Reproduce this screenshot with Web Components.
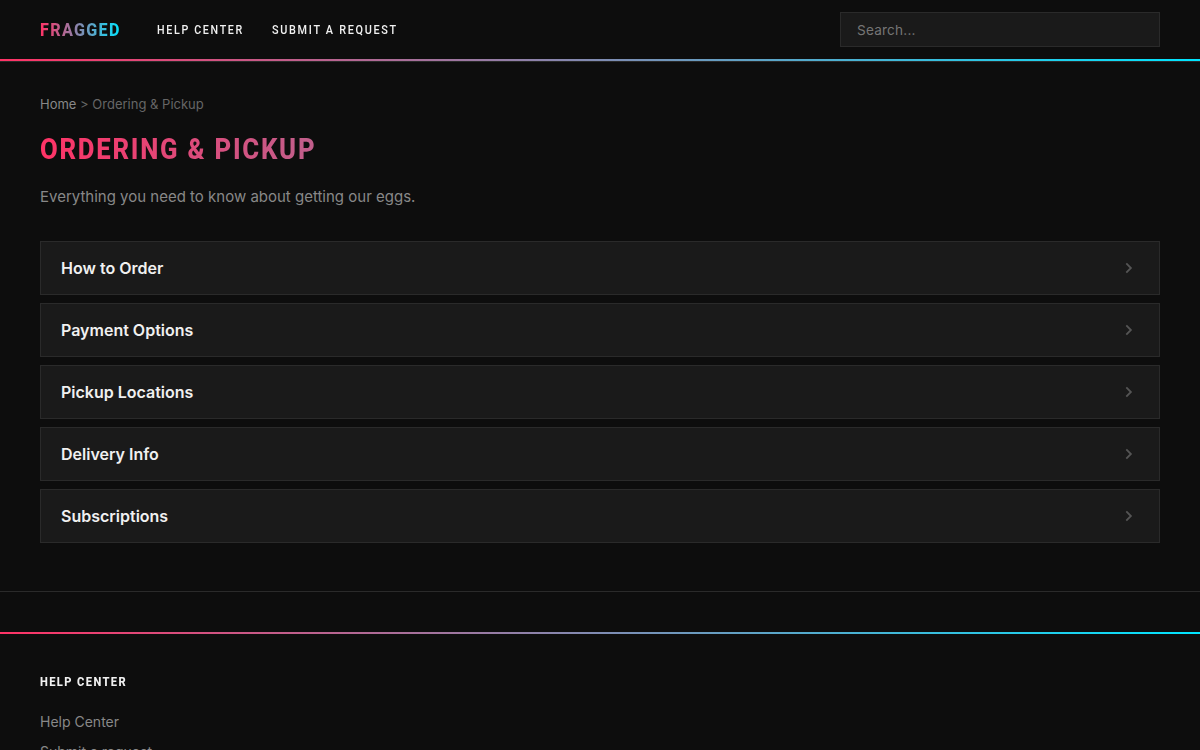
<!DOCTYPE html>
<html lang="en">
<head>
<meta charset="utf-8">
<title>Ordering &amp; Pickup – Fragged</title>
<style>
    :root {
        --bg: #0d0d0d;
        --surface: #1a1a1a;
        --line: #2a2a2a;
        --text: #f0f0f0;
        --muted: #888;
        --dim: #666;
        --pink: #ff3366;
        --cyan: #00e5ff;
        --gradient: linear-gradient(90deg, var(--pink), var(--cyan));
    }
    html { background: var(--bg); overflow: hidden; }
    body { margin: 0; height: 750px; overflow: hidden; background: var(--bg); color: var(--text);
        font: 16px/1.5 Inter, "Liberation Sans", sans-serif; }
</style>
</head>
<body>
<help-header></help-header>
<help-section heading="Ordering &amp; Pickup" intro="Everything you need to know about getting our eggs.">
    <help-card>How to Order</help-card>
    <help-card>Payment Options</help-card>
    <help-card>Pickup Locations</help-card>
    <help-card>Delivery Info</help-card>
    <help-card>Subscriptions</help-card>
</help-section>
<help-footer></help-footer>

<script>
(function () {
    "use strict";

    function define(name, html) {
        customElements.define(name, class extends HTMLElement {
            connectedCallback() {
                if (!this.shadowRoot) {
                    this.attachShadow({ mode: 'open' }).innerHTML =
                        typeof html === 'function' ? html(this) : html;
                }
            }
        });
    }

    // Narrow uppercase lettering. --w is the width it takes up, --sx the
    // horizontal squeeze and --grad the length of the gradient, if it has one.
    define('display-text', `
        <style>
            :host { display: block; width: var(--w); white-space: nowrap; text-transform: uppercase;
                font-family: Roboto, "Liberation Sans", sans-serif; line-height: 1.2; }
            span { display: inline-block; transform: scaleX(var(--sx, 1)); transform-origin: 0 50%; }
            :host([gradient]) span { background: var(--gradient) 0 0 / var(--grad, 100%) 100% no-repeat;
                -webkit-background-clip: text; background-clip: text; color: transparent; }
        </style>
        <span><slot></slot></span>`);

    define('help-header', `
        <style>
            :host { display: block; }
            header { display: flex; align-items: center; box-sizing: border-box; height: 59px; padding: 0 40px; }
            a { color: inherit; text-decoration: none; }
            .logo { --w: 80px; --sx: .872; padding-top: 1px; font-size: 18.5px; font-weight: 800; letter-spacing: 1.5px; }
            nav { display: flex; gap: 28px; margin-left: 37px; font-size: 12.8px; font-weight: 500; letter-spacing: 2px; }
            .help { --w: 87px; --sx: .835; }
            .submit { --w: 126px; --sx: .848; }
            input { box-sizing: border-box; width: 320px; height: 35px; margin: 0 0 0 auto; padding: 0 16px;
                background: var(--surface); border: 1px solid var(--line); border-radius: 0; color: var(--text);
                font: 13.6px Inter, "Liberation Sans", sans-serif; letter-spacing: .2px; }
            input::placeholder { color: #757575; }
            .rule { height: 2px; background: var(--gradient); border-bottom: 1px solid var(--line); background-clip: padding-box; }
        </style>
        <header>
            <a href="#"><display-text class="logo" gradient>Fragged</display-text></a>
            <nav>
                <a href="#"><display-text class="help">Help Center</display-text></a>
                <a href="#"><display-text class="submit">Submit a request</display-text></a>
            </nav>
            <input type="search" placeholder="Search..." aria-label="Search">
        </header>
        <div class="rule"></div>`);

    define('help-section', function (el) {
        var heading = el.getAttribute('heading').replace(/&/g, '&amp;');
        return `
        <style>
            :host { display: block; padding: 32px 40px 48px; }
            .crumbs { font-size: 13px; line-height: 20px; color: var(--dim); }
            .crumbs a { color: var(--muted); text-decoration: none; }
            h1 { margin: 18px 0 0; font-size: 29.5px; line-height: 36px; font-weight: 800; letter-spacing: 2px; }
            h1 display-text { --w: 276px; --sx: .872; --grad: 1284px; }
            p { margin: 18px 0 32px; font-size: 15px; line-height: 24px; color: var(--muted); }
            .list { display: flex; flex-direction: column; gap: 8px; }
        </style>
        <div class="crumbs"><a href="#">Home</a> &gt; ${heading}</div>
        <h1><display-text gradient>${heading}</display-text></h1>
        <p>${el.getAttribute('intro')}</p>
        <div class="list"><slot></slot></div>`;
    });

    define('help-card', `
        <style>
            :host { display: flex; align-items: center; justify-content: space-between; box-sizing: border-box;
                height: 54px; padding: 0 24px 0 20px; background: var(--surface); border: 1px solid var(--line);
                font-size: 16px; font-weight: 600; }
            svg { display: block; }
        </style>
        <span><slot></slot></span>
        <svg width="13" height="14" viewBox="0 0 13 14" fill="none" stroke="#555" stroke-width="1.8"><path d="M4.3 2.4 8.9 7 4.3 11.6"/></svg>`);

    define('help-footer', `
        <style>
            :host { display: block; padding-top: 40px; border-top: 1px solid var(--line); }
            .rule { height: 2px; background: var(--gradient); }
            .body { padding: 40px; }
            .title { --w: 87px; --sx: .87; font-size: 12.8px; font-weight: 800; letter-spacing: 1.6px; }
            ul { display: flex; flex-direction: column; gap: 8px; margin: 21px 0 0; padding: 0; list-style: none;
                font-size: 14px; line-height: 22px; color: var(--muted); }
        </style>
        <div class="rule"></div>
        <div class="body">
            <display-text class="title">Help Center</display-text>
            <ul>
                <li>Help Center</li>
                <li>Submit a request</li>
            </ul>
        </div>`);
})();
</script>
</body>
</html>
